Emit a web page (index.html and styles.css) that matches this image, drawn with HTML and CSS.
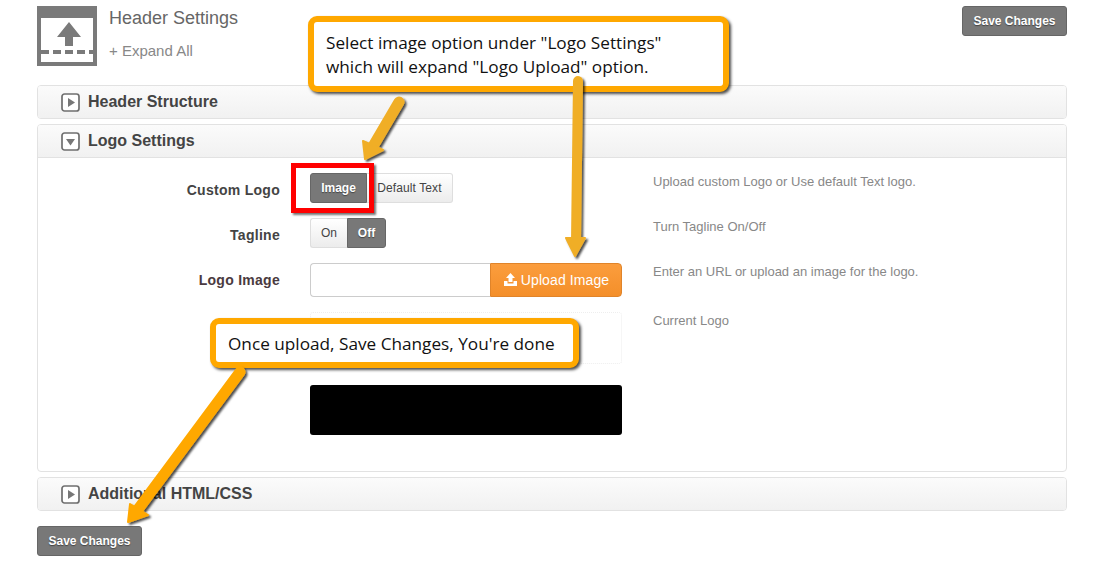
FILE: index.html
```html
<!DOCTYPE html>
<html lang="en">
<head>
<meta charset="utf-8">
<title>Header Settings</title>
<link rel="stylesheet" href="styles.css">
</head>
<body>
<main class="page">
  <header class="top">
    <svg class="top-icon" width="60" height="60" viewBox="0 0 60 60">
      <rect width="60" height="60" fill="#7a7a7a"/>
      <rect x="4" y="12" width="52" height="44" fill="#fff"/>
      <path d="M32 16 L44 31 H36 V40 H28 V31 H20 Z" fill="#7a7a7a"/>
      <path d="M4 46 H56" stroke="#7a7a7a" stroke-width="4" stroke-dasharray="8 4"/>
    </svg>
    <div class="top-text">
      <h1 class="title">Header Settings</h1>
      <div class="expand">+ Expand All</div>
    </div>
    <button class="btn-save">Save Changes</button>
  </header>

  <section class="panel"><div class="panel-head">
    <svg class="tog" width="19" height="19" viewBox="0 0 19 19"><rect x="1" y="1" width="17" height="17" rx="2.500" fill="#fff" stroke="#6f6f6f" stroke-width="1.700"/><path d="M7 5 L14 9.500 L7 14 Z" fill="#777"/></svg>
    <span>Header Structure</span></div></section>

  <section class="panel">
    <div class="panel-head head-open">
      <svg class="tog" width="19" height="19" viewBox="0 0 19 19"><rect x="1" y="1" width="17" height="17" rx="2.500" fill="#fff" stroke="#6f6f6f" stroke-width="1.700"/><path d="M5 7 L14 7 L9.500 13.500 Z" fill="#777"/></svg>
      <span>Logo Settings</span>
    </div>
    <div class="panel-body">
      <div class="row row-logo">
        <label class="lab">Custom Logo</label>
        <div class="seg">
          <span class="seg-item seg-on seg-image">Image</span><span class="seg-item seg-default">Default Text</span>
        </div>
        <p class="help">Upload custom Logo or Use default Text logo.</p>
      </div>
      <div class="row row-tag">
        <label class="lab">Tagline</label>
        <div class="seg">
          <span class="seg-item seg-onoff">On</span><span class="seg-item seg-on seg-off">Off</span>
        </div>
        <p class="help">Turn Tagline On/Off</p>
      </div>
      <div class="row row-img">
        <label class="lab lab-img">Logo Image</label>
        <div class="upload">
          <div class="upload-input"></div>
          <div class="upload-btn">
            <svg width="15" height="14" viewBox="0 0 15 14"><path d="M7.500 0 L12 5 H9.500 V9 H5.500 V5 H3 Z" fill="#fff"/><path d="M1 8 H4.500 V10.500 H10.500 V8 H14 V13 H1 Z" fill="#fff"/></svg>
            <span>Upload Image</span>
          </div>
        </div>
        <p class="help">Enter an URL or upload an image for the logo.</p>
      </div>
      <div class="row row-cur">
        <div></div>
        <div class="preview">
          <div class="preview-box"></div>
          <div class="preview-logo"></div>
        </div>
        <p class="help help-cur">Current Logo</p>
      </div>
    </div>
  </section>

  <section class="panel"><div class="panel-head">
    <svg class="tog" width="19" height="19" viewBox="0 0 19 19"><rect x="1" y="1" width="17" height="17" rx="2.500" fill="#fff" stroke="#6f6f6f" stroke-width="1.700"/><path d="M7 5 L14 9.500 L7 14 Z" fill="#777"/></svg>
    <span>Additional HTML/CSS</span></div></section>

  <button class="btn-save btn-bottom">Save Changes</button>
</main>

<div class="redbox"></div>
<div class="callout callout-one">Select image option under "Logo Settings"<br>which will expand "Logo Upload" option.</div>
<div class="callout callout-two">Once upload, Save Changes, You're done</div>

<svg class="arrows" width="1097" height="566" viewBox="0 0 1097 566">
  <defs>
    <filter id="sh" x="-30%" y="-30%" width="160%" height="160%"><feDropShadow dx="2" dy="2" stdDeviation="1" flood-color="#000" flood-opacity=".7"/></filter>
  </defs>
  <g filter="url(#sh)">
    <path d="M399 102 L372 148" stroke="#f0ae28" stroke-width="11" stroke-linecap="round" fill="none"/>
    <path d="M365 159 L363 141 L383 150 Z" fill="#f0ae28" stroke="#f0ae28" stroke-linejoin="round" stroke-width="2"/>
  </g>
  <g filter="url(#sh)">
    <path d="M578 81 L576 242" stroke="#f0ae28" stroke-width="10" stroke-linecap="round" fill="none"/>
    <path d="M575 256 L566 238 L585 238 Z" fill="#f0ae28" stroke="#f0ae28" stroke-linejoin="round" stroke-width="2"/>
  </g>
  <g filter="url(#sh)">
    <path d="M240 372 L136 512" stroke="#ffa800" stroke-width="11" stroke-linecap="round" fill="none"/>
    <path d="M128 522 L130 504 L148 515 Z" fill="#ffa800" stroke="#ffa800" stroke-linejoin="round" stroke-width="2"/>
  </g>
</svg>
</body>
</html>
```

FILE: styles.css
```css
* { box-sizing: border-box; }
html, body { margin: 0; padding: 0; background: #fff; }
body { width: 1097px; height: 566px; overflow: hidden; position: relative; font-family: "Liberation Sans", Arial, sans-serif; }
.page { padding: 6px 30px 0 37px; display: flex; flex-direction: column; }

.top { display: flex; align-items: flex-start; height: 79px; }
.top-icon { display: block; flex: none; }
.top-text { margin-left: 12px; flex: 1; }
.title { margin: 2px 0 0; font-size: 18px; line-height: 20px; font-weight: 400; color: #666; }
.expand { margin-top: 14px; font-size: 15px; line-height: 18px; color: #888; }

.btn-save { display: block; width: 105px; height: 30px; padding: 0; border: 1px solid #666; border-radius: 3px; background: #787878; color: #fff; font: 700 12px/28px "Liberation Sans", Arial, sans-serif; text-shadow: 0 1px 1px #444; }
.btn-bottom { margin-top: 10px; }

.panel { border: 1px solid #e2e2e2; border-radius: 4px; margin-bottom: 5px; background: #fff; }
.panel-head { height: 32px; display: flex; align-items: center; padding-left: 23px; background: linear-gradient(#fbfbfb, #f1f1f1); border-radius: 3px; font-size: 16px; font-weight: 700; color: #444; }
.head-open { height: 33px; border-bottom: 1px solid #e2e2e2; border-radius: 3px 3px 0 0; }
.tog { margin-right: 8px; flex: none; }

.panel-body { height: 313px; padding-top: 15px; }
.row { display: grid; grid-template-columns: 242px 312px 1fr; column-gap: 30px; align-items: start; }
.row-logo { height: 45px; }
.row-tag { height: 45px; }
.row-img { height: 49px; }
.lab { text-align: right; font-size: 14px; line-height: 30px; font-weight: 700; color: #444; letter-spacing: .28px; padding-top: 2px; }
.lab-img { color: #4a3a40; }
.help { margin: 0 0 0 1px; font-size: 13px; line-height: 16px; color: #888; padding-top: 1px; }

.seg { display: flex; height: 30px; }
.seg-item { display: block; height: 30px; font-size: 12px; line-height: 28px; text-align: center; border: 1px solid #dedede; background: linear-gradient(#fff, #ececec); color: #444; }
.seg-on { background: #787878; border-color: #666; color: #fff; font-weight: 700; text-shadow: 0 1px 1px #444; }
.seg-image { width: 57px; border-radius: 3px 0 0 3px; }
.seg-default { width: 86px; border-left: 0; border-radius: 0 3px 3px 0; letter-spacing: .1px; }
.seg-onoff { width: 37px; border-right: 0; border-radius: 3px 0 0 3px; }
.seg-off { width: 39px; border-radius: 0 3px 3px 0; }

.upload { display: flex; height: 34px; }
.upload-input { width: 180px; border: 1px solid #ccc; border-right: 0; border-radius: 4px 0 0 4px; background: #fff; }
.upload-btn { width: 132px; display: flex; align-items: center; justify-content: center; gap: 3px; border: 1px solid #e0842a; border-radius: 0 4px 4px 0; background: linear-gradient(#fb9d3d, #f48f2a); color: #fff; font-size: 14px; letter-spacing: .1px; }

.preview { display: flex; flex-direction: column; }
.preview-box { height: 52px; border: 1px dotted #eee; border-radius: 3px; }
.preview-logo { height: 50px; margin-top: 21px; background: #000; border-radius: 3px; }

.arrows { position: absolute; left: 0; top: 0; pointer-events: none; }
.redbox { position: absolute; left: 291px; top: 163px; width: 83px; height: 50px; border: 5px solid #f00; box-shadow: 2px 2px 2px rgba(0,0,0,.55); }
.callout { position: absolute; background: #fff; border: 6px solid #ffa800; border-radius: 9px; box-shadow: 2px 2px 3px rgba(0,0,0,.7); color: #111; font-family: "Open Sans", sans-serif; }
.callout-one { left: 308px; top: 16px; width: 421px; height: 76px; padding: 9px 0 0 12px; font-size: 17.2px; line-height: 24px; }
.callout-two { left: 210px; top: 318px; width: 369px; height: 50px; padding: 8px 0 0 12px; font-size: 17.2px; line-height: 24px; }
```
